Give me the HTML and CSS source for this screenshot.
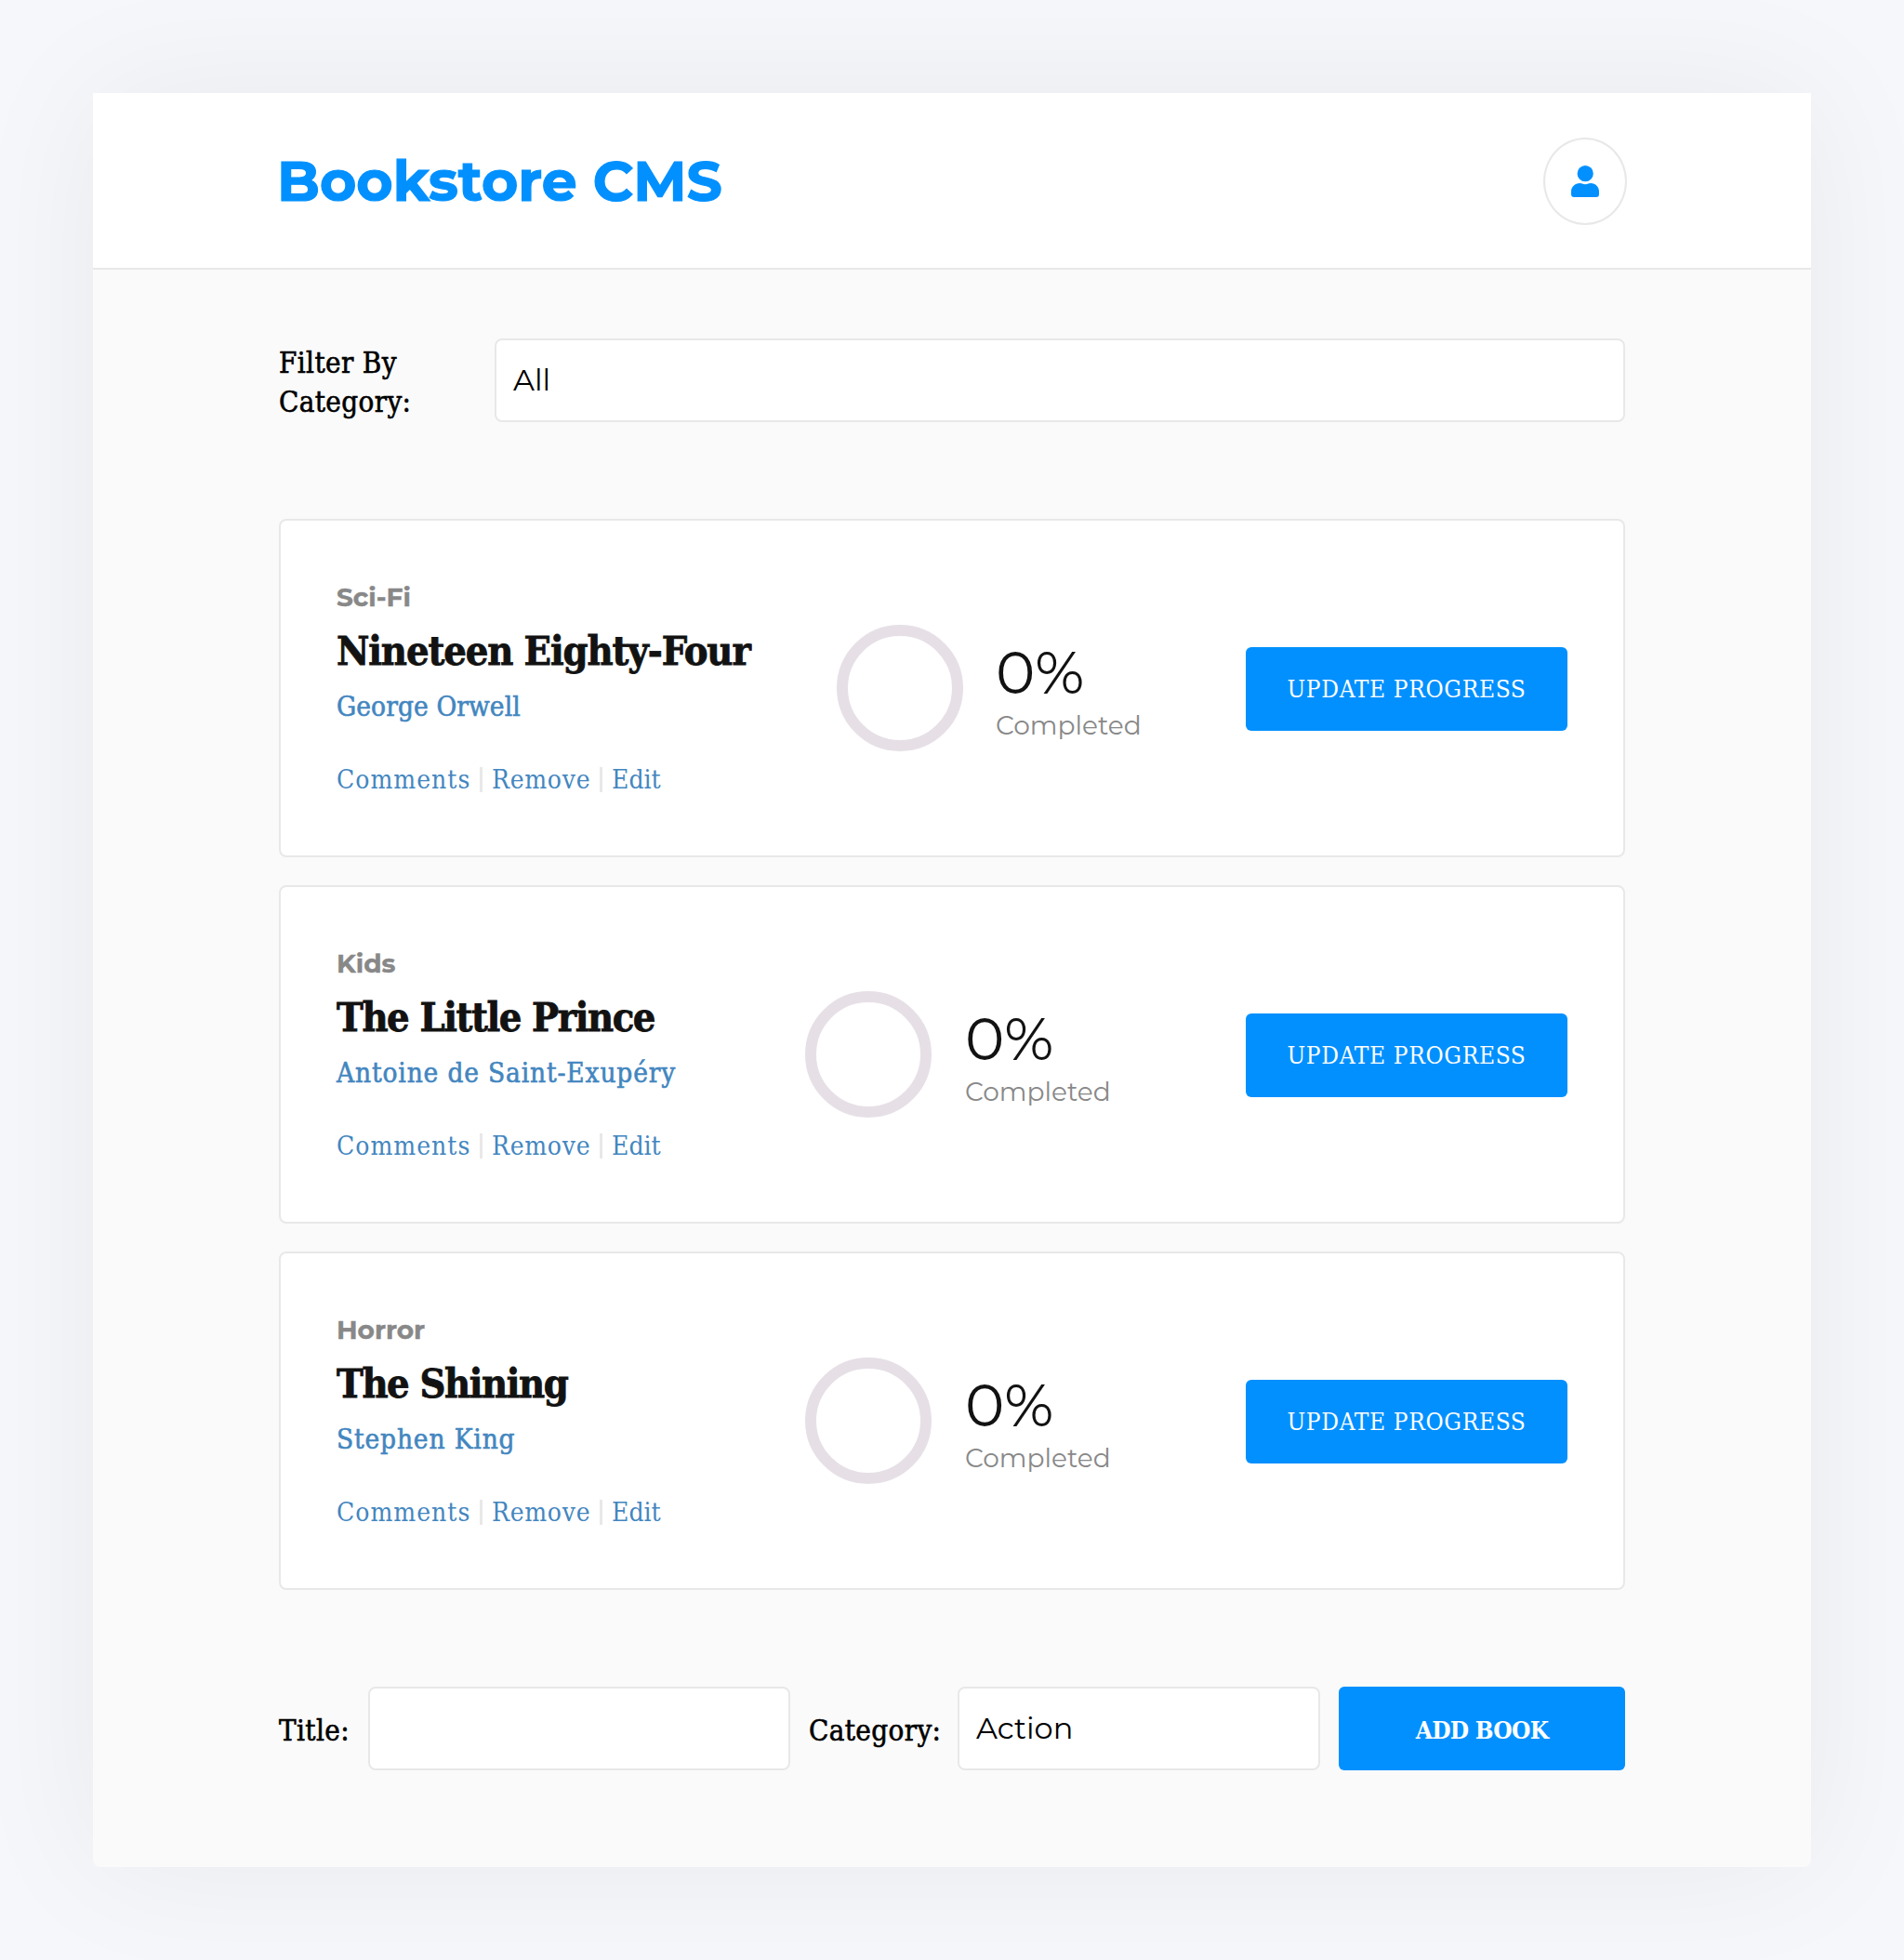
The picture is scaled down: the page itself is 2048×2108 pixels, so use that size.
FILE: index.html
```html
<!DOCTYPE html>
<html lang="en">
<head>
<meta charset="utf-8">
<title>Bookstore CMS</title>
<link rel="stylesheet" href="styles.css">
</head>
<body>
<div class="panel">
  <header class="header">
    <h1 class="brand">Bookstore CMS</h1>
    <button class="avatar" aria-label="User">
      <svg width="30" height="34" viewBox="0 0 30 34"><circle cx="15.2" cy="8.7" r="8.6"/><path d="M9.5 19C11.500 19 12.300 20.200 15.200 20.200S18.500 19 21 19C26.200 19 30 23 30 28V30.800Q30 34 27 34H3Q0 34 0 30.800V28C0 23 4 19 9.500 19Z"/></svg>
    </button>
  </header>
  <main class="content">
    <div class="filter">
      <label class="label filter-label">Filter By<br>Category:</label>
      <div class="field filter-field"><span class="all">All</span></div>
    </div>
    <ul class="books">
      <li class="book book-wide">
        <div class="info">
          <p class="category">Sci-Fi</p>
          <h2 class="title">Nineteen Eighty-Four</h2>
          <p class="author">George Orwell</p>
          <div class="links"><a class="comments">Comments</a><a class="remove">Remove</a><a class="edit">Edit</a></div>
        </div>
        <div class="ring"></div>
        <div class="stat"><p class="percent">0%</p><p class="completed">Completed</p></div>
        <button class="button update">UPDATE PROGRESS</button>
      </li>
      <li class="book">
        <div class="info">
          <p class="category">Kids</p>
          <h2 class="title">The Little Prince</h2>
          <p class="author">Antoine de Saint-Exupéry</p>
          <div class="links"><a class="comments">Comments</a><a class="remove">Remove</a><a class="edit">Edit</a></div>
        </div>
        <div class="ring"></div>
        <div class="stat"><p class="percent">0%</p><p class="completed">Completed</p></div>
        <button class="button update">UPDATE PROGRESS</button>
      </li>
      <li class="book">
        <div class="info">
          <p class="category">Horror</p>
          <h2 class="title">The Shining</h2>
          <p class="author">Stephen King</p>
          <div class="links"><a class="comments">Comments</a><a class="remove">Remove</a><a class="edit">Edit</a></div>
        </div>
        <div class="ring"></div>
        <div class="stat"><p class="percent">0%</p><p class="completed">Completed</p></div>
        <button class="button update">UPDATE PROGRESS</button>
      </li>
    </ul>
    <div class="add">
      <label class="label title-label">Title:</label>
      <div class="field title-field"></div>
      <label class="label category-label">Category:</label>
      <div class="field category-field"><span class="action">Action</span></div>
      <button class="button submit">ADD BOOK</button>
    </div>
  </main>
</div>
</body>
</html>
```

FILE: styles.css
```css
* { box-sizing: border-box; margin: 0; padding: 0; }

:root {
  --sans: Montserrat, Inter, "Liberation Sans", sans-serif;
  --slab: "Roboto Slab", "DejaVu Serif Condensed", "DejaVu Serif", serif;
  --blue: #0290ff;
  --link: #4386bf;
  --line: #e8e8e8;
}

body {
  min-height: 2108px;
  padding: 100px;
  background: #f5f7fa;
  color: #000;
  font-family: var(--slab);
  font-stretch: condensed;
}

p, h1, h2, a, label, span, button { white-space: nowrap; }

.panel {
  height: 1908px;
  background: #fafafa;
  border-radius: 0 0 8px 8px;
  box-shadow: 0 0 150px rgba(0, 0, 40, .06);
}

.header {
  display: flex;
  justify-content: space-between;
  align-items: center;
  height: 190px;
  padding: 0 198px 0 198px;
  background: #fff;
  border-bottom: 2px solid var(--line);
}

.brand {
  padding-top: 1px;
  color: var(--blue);
  font: 700 60px/70px var(--sans);
  letter-spacing: .05px;
  -webkit-text-stroke: 1.2px currentColor;
}

.avatar {
  display: flex;
  justify-content: center;
  align-items: center;
  width: 90px;
  height: 94px;
  margin-top: 2px;
  background: #fff;
  border: 2px solid var(--line);
  border-radius: 50%;
}

.avatar svg { fill: var(--blue); }

.content { padding: 74px 200px 0; }

.filter, .add { display: flex; align-items: center; }

.label {
  font-size: 31px;
  line-height: 42px;
  letter-spacing: .4px;
  -webkit-text-stroke: .6px currentColor;
}

.filter-label { width: 232px; padding-top: 4px; }

.field {
  display: flex;
  align-items: center;
  height: 90px;
  padding-left: 18px;
  background: #fff;
  border: 2px solid var(--line);
  border-radius: 8px;
  font: 400 32px/40px var(--sans);
}

.filter-field { flex: 1; }

.books {
  display: grid;
  gap: 30px;
  margin: 104px 0;
  list-style: none;
}

.book {
  display: flex;
  align-items: center;
  height: 364px;
  padding: 0 60px;
  background: #fff;
  border: 2px solid var(--line);
  border-radius: 8px;
}

.info { align-self: flex-start; width: 504px; padding-top: 65px; }
.book-wide .info { width: 538px; }

.category { color: #888; font: 700 28px/34px var(--sans); -webkit-text-stroke: .4px currentColor; }

.title {
  margin-top: 13px;
  color: #121212;
  font-size: 43px;
  font-weight: 700;
  line-height: 56px;
  letter-spacing: -1.4px;
  -webkit-text-stroke: .8px currentColor;
}

.author {
  margin-top: 12px;
  color: var(--link);
  font-size: 29.5px;
  line-height: 40px;
  letter-spacing: .85px;
  -webkit-text-stroke: .6px currentColor;
}

.book-wide .title { letter-spacing: -1.1px; }
.book-wide .author { letter-spacing: .1px; }

.links {
  display: flex;
  margin-top: 44px;
  color: var(--link);
  font-size: 28px;
  line-height: 30px;
}

.comments, .remove {
  margin-right: 10px;
  background: linear-gradient(#e8e8e8, #e8e8e8) right 1px / 3px 27px no-repeat;
}

.comments { width: 157px; letter-spacing: 1px; }
.remove { width: 119px; letter-spacing: .7px; }

.ring {
  width: 136px;
  height: 136px;
  border: 12px solid #e6e0e6;
  border-radius: 50%;
}

.stat { margin-left: 36px; padding-top: 9px; font-family: var(--sans); }
.book-wide .stat { margin-left: 35px; }
.percent { color: #121212; font-size: 64px; font-weight: 400; line-height: 62px; }
.completed { margin-top: 9px; color: #888; font-size: 28px; line-height: 34px; }

.button {
  height: 90px;
  background: var(--blue);
  border: 0;
  border-radius: 6px;
  color: #fff;
  font-family: var(--slab);
  font-stretch: condensed;
  font-size: 26px;
}

.update { width: 346px; margin: 2px 0 0 auto; letter-spacing: .65px; }

.title-label { width: 96px; padding-top: 3px; }
.title-field { width: 454px; }
.category-label { width: 160px; margin-left: 20px; padding-top: 3px; }
.category-field { width: 390px; }
.submit { width: 308px; margin-left: 20px; padding-top: 3px; font-weight: 700; letter-spacing: -.7px; }
```
